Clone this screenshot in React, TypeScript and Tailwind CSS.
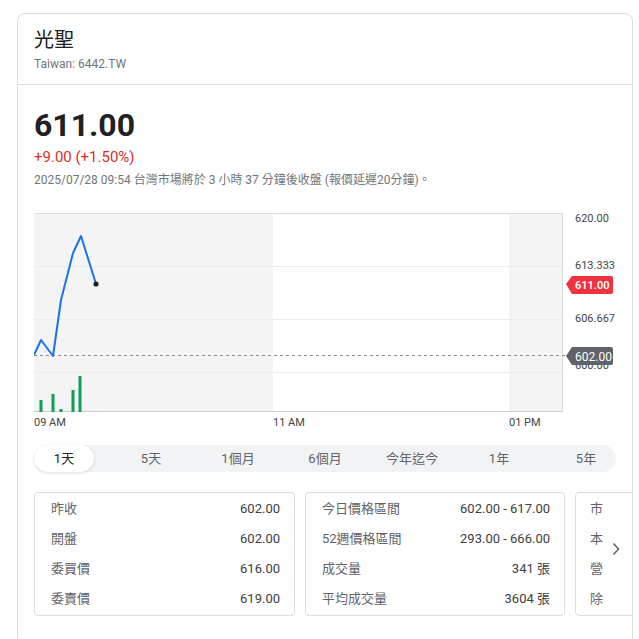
import React from "react";

const font = { fontFamily: 'Roboto, "Noto Sans CJK TC", Arial, sans-serif' };

function Chart() {
  const pts = [
    [0, 142],
    [7, 127],
    [19, 143],
    [27, 87],
    [39, 40],
    [47, 23],
    [62, 71],
  ];
  const bars = [
    [7, 187],
    [19, 181],
    [27, 196],
    [39, 177],
    [46, 163],
  ];
  return (
    <svg width="582" height="222" viewBox="0 0 582 222" className="block">
      <rect x="0" y="0" width="239" height="199" fill="#f4f4f4" />
      <rect x="475" y="0" width="54" height="199" fill="#f4f4f4" />
      <line x1="0" y1="0.5" x2="529" y2="0.5" stroke="#dcdcdc" />
      <line x1="0" y1="53.5" x2="529" y2="53.5" stroke="#ececec" />
      <line x1="0" y1="106.5" x2="529" y2="106.5" stroke="#ececec" />
      <line x1="0" y1="159.5" x2="529" y2="159.5" stroke="#ececec" />
      <line x1="528.5" y1="0" x2="528.5" y2="199" stroke="#dcdcdc" />
      <line x1="0" y1="198.5" x2="529" y2="198.5" stroke="#cfcfcf" />
      <line x1="0" y1="142.5" x2="532" y2="142.5" stroke="#8a8a8a" strokeDasharray="3 3" />
      {bars.map(([x, y], i) => (
        <rect key={i} x={x - 1.5} y={y} width="3" height={199 - y} fill="#0f9d58" />
      ))}
      <polyline
        points={pts.map((p) => p.join(",")).join(" ")}
        fill="none"
        stroke="#1a73e8"
        strokeWidth="2"
        strokeLinejoin="round"
      />
      <circle cx="62" cy="71" r="2.6" fill="#202124" />
      <g fontSize="11" fill="#444" style={font}>
        <text x="541" y="9">620.00</text>
        <text x="541" y="56">613.333</text>
        <text x="541" y="109">606.667</text>
        <text x="541" y="156">600.00</text>
        <text x="0" y="213">09 AM</text>
        <text x="239" y="213">11 AM</text>
        <text x="475" y="213">01 PM</text>
      </g>
      <g>
        <path d="M532 71 L538 63 L577 63 Q579 63 579 65 L579 79 Q579 81 577 81 L538 81 Z" fill="#ef3340" />
        <text x="541" y="75.5" fontSize="11" fill="#fff" fontWeight="600" style={font}>
          611.00
        </text>
      </g>
      <g>
        <path d="M532 143 L538 134 L577 134 Q579 134 579 136 L579 150 Q579 152 577 152 L538 152 Z" fill="#5f6368" />
        <text x="541" y="147.5" fontSize="12" fill="#fff" style={font}>
          602.00
        </text>
      </g>
    </svg>
  );
}

function StatCard({ rows, className = "" }: { rows: [string, string][]; className?: string }) {
  return (
    <div className={`shrink-0 border border-[#dadce0] rounded-[4px] py-[1px] ${className}`}>
      {rows.map(([k, v], i) => (
        <div key={i} className="h-[30px] flex items-center justify-between pl-[16px] pr-[14px] text-[13px]">
          <span className="text-[#5f6368]">{k}</span>
          <span className="text-[#3c4043]">{v}</span>
        </div>
      ))}
    </div>
  );
}

export default function App() {
  const tabs = ["1天", "5天", "1個月", "6個月", "今年迄今", "1年", "5年"];
  return (
    <div className="w-[639px] h-[639px] overflow-hidden bg-white pt-[13px] pl-[17px]" style={font}>
      <div className="w-[616px] h-[700px] border border-[#dadce0] rounded-[8px] overflow-hidden">
        <div className="px-[16px] pt-[12px] pb-[12px] border-b border-[#e0e0e0]">
          <div className="text-[20px] leading-[28px] text-[#202124]">光聖</div>
          <div className="mt-[2px] text-[12px] leading-[16px] text-[#70757a]">Taiwan: 6442.TW</div>
        </div>
        <div className="px-[16px] pt-[20px]">
          <div className="text-[32px] leading-[40px] font-bold text-[#202124]">611.00</div>
          <div className="mt-[2px] text-[15px] leading-[20px] text-[#d93025]">+9.00 (+1.50%)</div>
          <div className="mt-[5px] text-[12px] leading-[16px] text-[#70757a]">
            2025/07/28 09:54 台灣市場將於 3 小時 37 分鐘後收盤 (報價延遲20分鐘)。
          </div>
          <div className="mt-[25px]">
            <Chart />
          </div>
          <div className="mt-[10px] w-[582px] h-[27px] bg-[#f1f3f4] rounded-full flex gap-[27px]">
            {tabs.map((t, i) => (
              <div
                key={t}
                className={`w-[60px] shrink-0 h-[27px] flex items-center justify-center text-[13px] rounded-full ${
                  i === 0 ? "bg-white text-[#202124] shadow-[0_1px_3px_rgba(0,0,0,0.15)]" : "text-[#5f6368]"
                }`}
              >
                {t}
              </div>
            ))}
          </div>
          <div className="relative mt-[20px] flex gap-[10px]">
            <StatCard
              className="w-[261px]"
              rows={[
                ["昨收", "602.00"],
                ["開盤", "602.00"],
                ["委買價", "616.00"],
                ["委賣價", "619.00"],
              ]}
            />
            <StatCard
              className="w-[260px]"
              rows={[
                ["今日價格區間", "602.00 - 617.00"],
                ["52週價格區間", "293.00 - 666.00"],
                ["成交量", "341 張"],
                ["平均成交量", "3604 張"],
              ]}
            />
            <div className="shrink-0 w-[200px] border border-[#dadce0] rounded-[4px] py-[1px]">
              {["市", "本", "營", "除"].map((k) => (
                <div key={k} className="h-[30px] flex items-center pl-[14px] text-[13px] text-[#5f6368]">
                  {k}
                </div>
              ))}
            </div>
            <div className="absolute left-[578px] top-[50px] text-[#5f6368]">
              <svg width="8" height="14" viewBox="0 0 8 14">
                <path d="M1.5 1.5 L6.5 7 L1.5 12.5" fill="none" stroke="#5f6368" strokeWidth="1.6" />
              </svg>
            </div>
          </div>
        </div>
      </div>
    </div>
  );
}
